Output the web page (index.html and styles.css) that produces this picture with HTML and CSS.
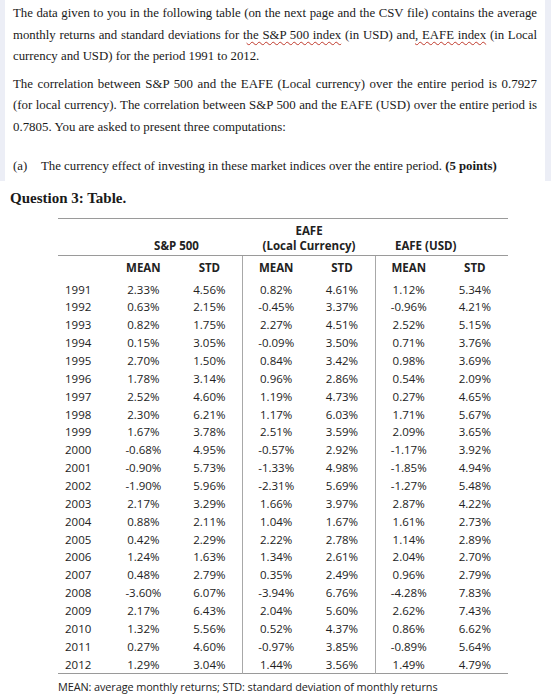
FILE: index.html
```html
<!DOCTYPE html>
<html>
<head>
<meta charset="utf-8">
<link rel="stylesheet" href="styles.css">
</head>
<body>
<div class="panel">
  <p class="para">The data given to you in the following table (on the next page and the CSV file) contains the average monthly returns and standard deviations for t<span class="squig">he S&amp;P 500 index</span> (in USD) and<span class="squig">, EAFE index</span> (in Local currency and USD) for the period 1991 to 2012.</p>
  <p class="para p2">The correlation between S&amp;P 500 and the EAFE (Local currency) over the entire period is 0.7927 (for local currency). The correlation between S&amp;P 500 and the EAFE (USD) over the entire period is 0.7805. You are asked to present three computations:</p>
  <div class="item"><span class="label">(a)</span><span>The currency effect of investing in these market indices over the entire period. <b>(5 points)</b></span></div>
</div>
<h2 class="qtitle">Question 3: Table.</h2>
<table class="data">
  <colgroup>
    <col class="c-year"><col class="c-num"><col class="c-num"><col class="c-num"><col class="c-num"><col class="c-num"><col class="c-num">
  </colgroup>
  <thead>
    <tr class="h1">
      <th></th>
      <th colspan="2">S&amp;P 500</th>
      <th colspan="2">EAFE<br>(Local Currency)</th>
      <th colspan="2" class="usd">EAFE (USD)</th>
    </tr>
    <tr class="h2">
      <th></th><th>MEAN</th><th>STD</th><th class="sep">MEAN</th><th>STD</th><th class="sep">MEAN</th><th>STD</th>
    </tr>
  </thead>
  <tbody>
    <tr><td>1991</td><td>2.33%</td><td>4.56%</td><td class="sep">0.82%</td><td>4.61%</td><td class="sep">1.12%</td><td>5.34%</td></tr>
    <tr><td>1992</td><td>0.63%</td><td>2.15%</td><td class="sep">-0.45%</td><td>3.37%</td><td class="sep">-0.96%</td><td>4.21%</td></tr>
    <tr><td>1993</td><td>0.82%</td><td>1.75%</td><td class="sep">2.27%</td><td>4.51%</td><td class="sep">2.52%</td><td>5.15%</td></tr>
    <tr><td>1994</td><td>0.15%</td><td>3.05%</td><td class="sep">-0.09%</td><td>3.50%</td><td class="sep">0.71%</td><td>3.76%</td></tr>
    <tr><td>1995</td><td>2.70%</td><td>1.50%</td><td class="sep">0.84%</td><td>3.42%</td><td class="sep">0.98%</td><td>3.69%</td></tr>
    <tr><td>1996</td><td>1.78%</td><td>3.14%</td><td class="sep">0.96%</td><td>2.86%</td><td class="sep">0.54%</td><td>2.09%</td></tr>
    <tr><td>1997</td><td>2.52%</td><td>4.60%</td><td class="sep">1.19%</td><td>4.73%</td><td class="sep">0.27%</td><td>4.65%</td></tr>
    <tr><td>1998</td><td>2.30%</td><td>6.21%</td><td class="sep">1.17%</td><td>6.03%</td><td class="sep">1.71%</td><td>5.67%</td></tr>
    <tr><td>1999</td><td>1.67%</td><td>3.78%</td><td class="sep">2.51%</td><td>3.59%</td><td class="sep">2.09%</td><td>3.65%</td></tr>
    <tr><td>2000</td><td>-0.68%</td><td>4.95%</td><td class="sep">-0.57%</td><td>2.92%</td><td class="sep">-1.17%</td><td>3.92%</td></tr>
    <tr><td>2001</td><td>-0.90%</td><td>5.73%</td><td class="sep">-1.33%</td><td>4.98%</td><td class="sep">-1.85%</td><td>4.94%</td></tr>
    <tr><td>2002</td><td>-1.90%</td><td>5.96%</td><td class="sep">-2.31%</td><td>5.69%</td><td class="sep">-1.27%</td><td>5.48%</td></tr>
    <tr><td>2003</td><td>2.17%</td><td>3.29%</td><td class="sep">1.66%</td><td>3.97%</td><td class="sep">2.87%</td><td>4.22%</td></tr>
    <tr><td>2004</td><td>0.88%</td><td>2.11%</td><td class="sep">1.04%</td><td>1.67%</td><td class="sep">1.61%</td><td>2.73%</td></tr>
    <tr><td>2005</td><td>0.42%</td><td>2.29%</td><td class="sep">2.22%</td><td>2.78%</td><td class="sep">1.14%</td><td>2.89%</td></tr>
    <tr><td>2006</td><td>1.24%</td><td>1.63%</td><td class="sep">1.34%</td><td>2.61%</td><td class="sep">2.04%</td><td>2.70%</td></tr>
    <tr><td>2007</td><td>0.48%</td><td>2.79%</td><td class="sep">0.35%</td><td>2.49%</td><td class="sep">0.96%</td><td>2.79%</td></tr>
    <tr><td>2008</td><td>-3.60%</td><td>6.07%</td><td class="sep">-3.94%</td><td>6.76%</td><td class="sep">-4.28%</td><td>7.83%</td></tr>
    <tr><td>2009</td><td>2.17%</td><td>6.43%</td><td class="sep">2.04%</td><td>5.60%</td><td class="sep">2.62%</td><td>7.43%</td></tr>
    <tr><td>2010</td><td>1.32%</td><td>5.56%</td><td class="sep">0.52%</td><td>4.37%</td><td class="sep">0.86%</td><td>6.62%</td></tr>
    <tr><td>2011</td><td>0.27%</td><td>4.60%</td><td class="sep">-0.97%</td><td>3.85%</td><td class="sep">-0.89%</td><td>5.64%</td></tr>
    <tr><td>2012</td><td>1.29%</td><td>3.04%</td><td class="sep">1.44%</td><td>3.56%</td><td class="sep">1.49%</td><td>4.79%</td></tr>
  </tbody>
</table>
<p class="note">MEAN: average monthly returns; STD: standard deviation of monthly returns</p>
</body>
</html>
```
FILE: styles.css
```css
html, body {
  margin: 0;
  padding: 0;
  background: #ffffff;
}
body {
  width: 551px;
  height: 700px;
  overflow: hidden;
  color: #1a1a1a;
}
.panel {
  height: 181px;
  box-sizing: border-box;
  border-left: 5px solid #eceef6;
  border-right: 6px solid #eceef6;
  padding: 3px 8px 0 8px;
  font-family: "Liberation Serif", "Times New Roman", serif;
  font-size: 12.8px;
  line-height: 21.5px;
}
.para {
  margin: 0;
  text-align: justify;
}
.p2 {
  margin-top: 6px;
  font-size: 12.9px;
}
.squig {
  text-decoration: underline wavy #c0392b;
  text-decoration-thickness: 1px;
  text-underline-offset: 2px;
}
.item {
  display: flex;
  margin-top: 18px;
}
.label {
  width: 28px;
  flex: none;
}
.qtitle {
  margin: 7px 0 0 10px;
  font-family: "Liberation Serif", "Times New Roman", serif;
  font-size: 15px;
  line-height: 20px;
  font-weight: bold;
}
.data {
  margin: 10px 0 0 58px;
  border-collapse: collapse;
  table-layout: fixed;
  width: 450px;
  font-family: "Open Sans", sans-serif;
  font-size: 11.5px;
  color: #222;
  border-top: 1px solid #9a9a9a;
  border-bottom: 1px solid #9a9a9a;
}
.c-year { width: 52px; }
.c-num { width: 66px; }
.data th, .data td {
  padding: 0;
  text-align: center;
}
.data th {
  font-weight: bold;
}
.h1 th {
  height: 34px;
  line-height: 15px;
  vertical-align: bottom;
  padding-bottom: 2px;
  border-bottom: 1px solid #9a9a9a;
}
.h1 th.usd {
  padding-right: 32px;
}
.h2 th {
  height: 25px;
  vertical-align: top;
  padding-top: 3px;
  box-sizing: border-box;
  line-height: 17px;
}
.data td {
  height: 17.86px;
  line-height: 17.86px;
}
.data tbody td:first-child {
  text-align: left;
  padding-left: 7px;
}
.data .sep {
  border-left: 1.5px solid #a8a8a8;
}
.note {
  margin: 5px 0 0 58px;
  font-family: "Open Sans", sans-serif;
  font-size: 10.9px;
  letter-spacing: -0.1px;
  color: #222;
}
```
